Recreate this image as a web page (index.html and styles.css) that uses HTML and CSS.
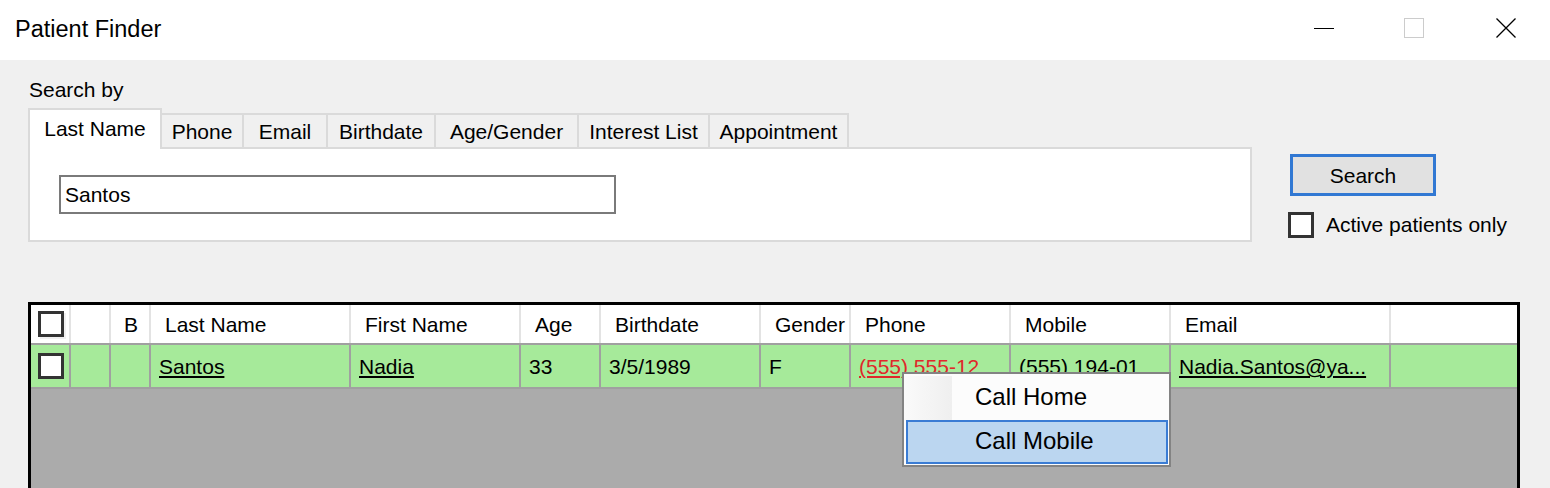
FILE: index.html
```html
<!DOCTYPE html>
<html>
<head>
<meta charset="utf-8">
<title>Patient Finder</title>
<link rel="stylesheet" href="styles.css">
</head>
<body>
<div class="window">
  <div class="titlebar">
    <div class="title">Patient Finder</div>
    <div class="controls">
      <svg class="ctl" width="20" height="20" viewBox="0 0 20 20"><line x1="0" y1="10.5" x2="20" y2="10.5" stroke="#000" stroke-width="1"/></svg>
      <svg class="ctl" width="20" height="20" viewBox="0 0 20 20"><rect x="0.5" y="0.5" width="19" height="19" fill="none" stroke="#cccccc" stroke-width="1"/></svg>
      <svg class="ctl close" width="20" height="20" viewBox="0 0 20 20"><path d="M0.5 0.5 L19.5 19.5 M19.5 0.5 L0.5 19.5" stroke="#000" stroke-width="1.3" fill="none"/></svg>
    </div>
  </div>

  <div class="main">
    <div class="search-by">Search by</div>
    <div class="search-row">
      <div class="tabs-wrap">
        <div class="tabs">
          <div class="tab active t-last">Last Name</div>
          <div class="tab t-phone">Phone</div>
          <div class="tab t-email">Email</div>
          <div class="tab t-birth">Birthdate</div>
          <div class="tab t-age">Age/Gender</div>
          <div class="tab t-interest">Interest List</div>
          <div class="tab t-appt">Appointment</div>
        </div>
        <div class="panel">
          <div class="textbox">Santos</div>
        </div>
      </div>
      <div class="side">
        <div class="btn">Search</div>
        <div class="check-row">
          <span class="chk"></span>
          <span class="check-label">Active patients only</span>
        </div>
      </div>
    </div>

    <div class="grid">
      <div class="row head">
        <div class="c c-chk"><span class="chk chk-head"></span></div>
        <div class="c"></div>
        <div class="c c-b">B</div>
        <div class="c">Last Name</div>
        <div class="c">First Name</div>
        <div class="c">Age</div>
        <div class="c">Birthdate</div>
        <div class="c">Gender</div>
        <div class="c">Phone</div>
        <div class="c">Mobile</div>
        <div class="c">Email</div>
        <div class="c"></div>
      </div>
      <div class="row data">
        <div class="c c-chk"><span class="chk"></span></div>
        <div class="c"></div>
        <div class="c"></div>
        <div class="c"><span class="link">Santos</span></div>
        <div class="c"><span class="link">Nadia</span></div>
        <div class="c">33</div>
        <div class="c">3/5/1989</div>
        <div class="c">F</div>
        <div class="c"><span class="link red">(555) 555-12</span></div>
        <div class="c"><span class="link">(555) 194-01</span></div>
        <div class="c"><span class="link">Nadia.Santos@ya...</span></div>
        <div class="c"></div>
      </div>
    </div>
  </div>

  <div class="menu">
    <div class="mi mi-first"><span class="gutter"></span><span class="mi-text">Call Home</span></div>
    <div class="mi mi-hover"><span class="mi-text">Call Mobile</span></div>
  </div>
</div>
</body>
</html>
```

FILE: styles.css
```css
* {
  box-sizing: border-box;
  margin: 0;
  padding: 0;
}

html, body {
  width: 1550px;
  height: 488px;
  overflow: hidden;
}

body {
  background: #f0f0f0;
  font-family: "Liberation Sans", Arial, sans-serif;
  font-size: 21px;
  line-height: 24px;
  color: #000;
}

.window {
  position: relative;
  width: 1550px;
  height: 488px;
}

/* Title bar */
.titlebar {
  height: 60px;
  background: #fff;
  display: flex;
  align-items: flex-start;
}

.title {
  font-size: 23.5px;
  line-height: 28px;
  padding: 15px 0 0 15px;
}

.controls {
  margin-left: auto;
  display: flex;
  gap: 70px;
  padding: 18px 34px 0 0;
}

.ctl {
  display: block;
}

.ctl.close {
  margin-left: 2px;
}

/* Main area */
.main {
  padding: 18px 0 0 28px;
}

.search-by {
  padding-left: 1px;
}

.search-row {
  display: flex;
  align-items: flex-start;
  margin-top: 6px;
}

.tabs-wrap {
  width: 1224px;
}

.tabs {
  display: flex;
  align-items: flex-end;
  height: 39px;
  position: relative;
  z-index: 1;
}

.tab {
  height: 34px;
  border: 2px solid #dadada;
  border-bottom: none;
  background: #f0f0f0;
  text-align: center;
  padding-top: 5px;
  margin-left: -2px;
  white-space: nowrap;
}

.tab:first-child {
  margin-left: 0;
}

.tab.active {
  height: 41px;
  margin-bottom: -2px;
  background: #fff;
  padding-top: 7px;
  position: relative;
  z-index: 2;
}

.t-last { width: 134px; }
.t-phone { width: 84px; }
.t-email { width: 86px; }
.t-birth { width: 110px; }
.t-age { width: 145px; }
.t-interest { width: 133px; }
.t-appt { width: 141px; }

.panel {
  height: 95px;
  border: 2px solid #dadada;
  background: #fff;
  padding: 26px 0 0 29px;
}

.textbox {
  width: 557px;
  height: 39px;
  border: 2px solid #7a7a7a;
  background: #fff;
  padding-left: 4px;
  line-height: 35px;
}

.side {
  margin-left: 36px;
  margin-top: 46px;
}

.btn {
  margin-left: 2px;
  width: 146px;
  height: 42px;
  border: 3px solid #3178d3;
  background: #e1e1e1;
  display: flex;
  align-items: center;
  justify-content: center;
  padding-top: 1px;
}

.check-row {
  display: flex;
  align-items: center;
  gap: 12px;
  margin-top: 16px;
}

.chk {
  display: block;
  width: 26px;
  height: 26px;
  border: 3px solid #333;
  background: #fff;
  flex: none;
}

/* Grid */
.grid {
  margin-top: 60px;
  width: 1492px;
  height: 200px;
  border: 3px solid #000;
  border-bottom: none;
  background: #ababab;
}

.row {
  display: grid;
  grid-template-columns: 40px 40px 40px 200px 170px 80px 160px 90px 160px 160px 220px 1fr;
}

.head {
  height: 40px;
  background: #fff;
  border-bottom: 2px solid #a0a0a0;
}

.data {
  height: 44px;
  background: #a6ea9a;
  border-bottom: 2px solid #a0a0a0;
}

.c {
  display: flex;
  align-items: center;
  white-space: nowrap;
  overflow: hidden;
  padding-top: 2px;
}

.head .c {
  border-right: 2px solid #e3e3e3;
  padding-left: 14px;
}

.data .c {
  border-right: 2px solid #a0a0a0;
  padding-left: 8px;
}

.row .c:last-child {
  border-right: none;
}

.row .c-chk {
  padding-left: 7px;
  padding-top: 0;
}

.head .c-b {
  justify-content: flex-end;
  padding-left: 0;
  padding-right: 11px;
}

.chk-head {
  box-shadow: 2px 2px 0 #f0f0f0;
}

.link {
  text-decoration: underline;
  text-decoration-thickness: 2px;
  text-underline-offset: 2px;
}

.link.red {
  color: #e0282a;
}

/* Context menu */
.menu {
  position: absolute;
  left: 902px;
  top: 372px;
  width: 269px;
  height: 95px;
  border: 2px solid #838383;
  background: #fcfcfc;
  padding-top: 2px;
  font-size: 24px;
  line-height: 28px;
}

.mi {
  position: relative;
  height: 44px;
  display: flex;
  align-items: center;
  padding-bottom: 2px;
}

.mi-first {
  padding-left: 71px;
}

.gutter {
  position: absolute;
  left: 0;
  top: 0;
  width: 48px;
  height: 44px;
  background: linear-gradient(to right, #fafafa, #efefef);
}

.mi-hover {
  margin: 0 1px 0 2px;
  border: 2px solid #3a7cd4;
  background: #bbd6f0;
  padding-left: 67px;
}

.mi-text {
  position: relative;
}
```
